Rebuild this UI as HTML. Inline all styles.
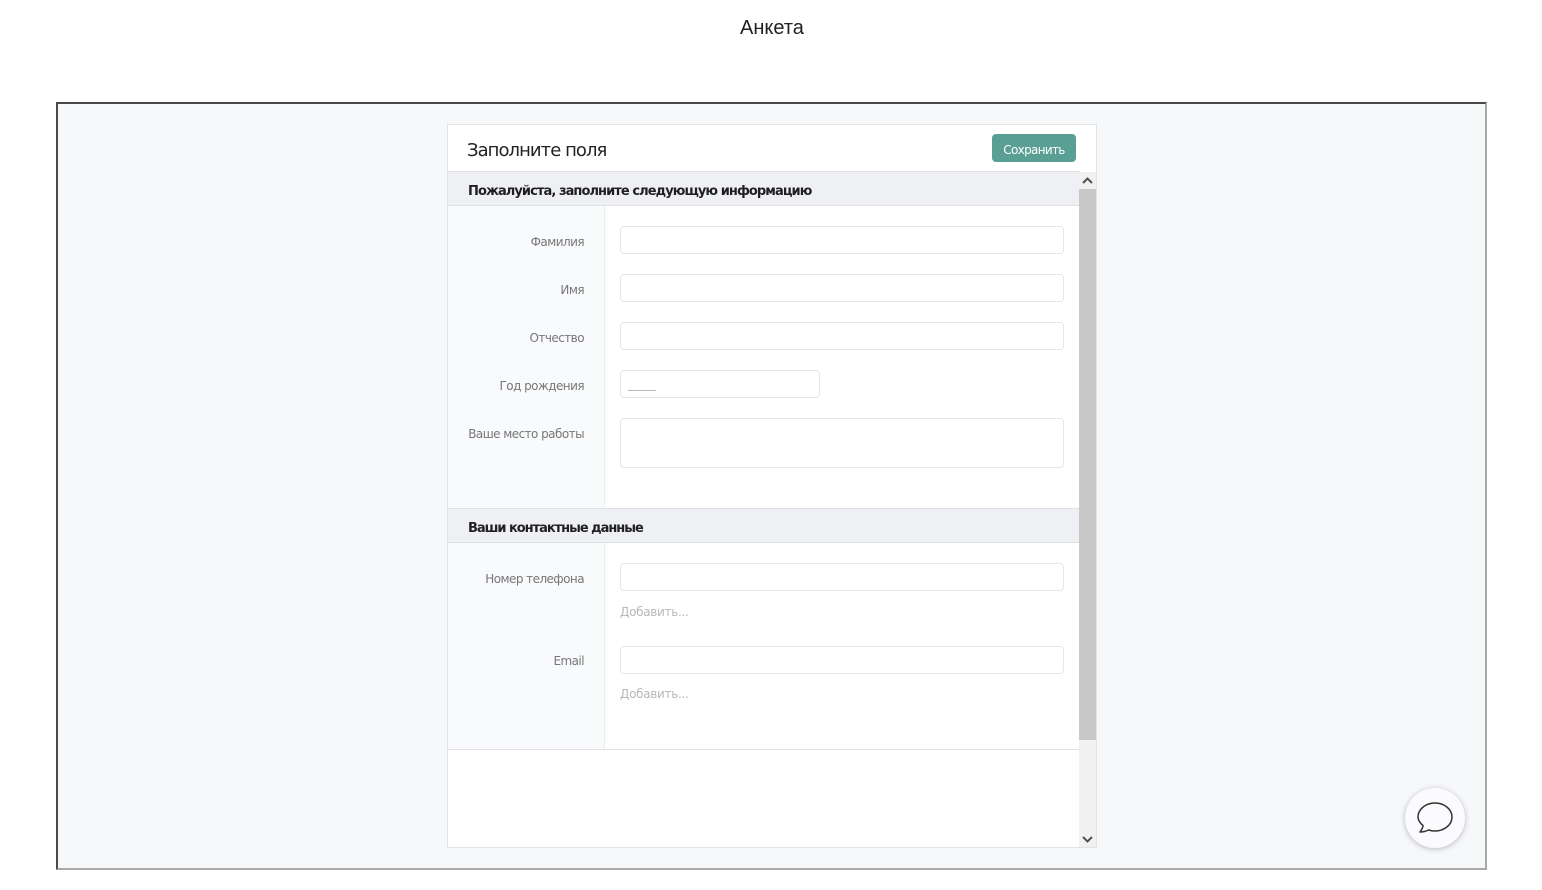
<!DOCTYPE html>
<html lang="ru"><head><meta charset="utf-8"><title>Анкета</title>
<style>
html,body{margin:0;padding:0;background:#fff;width:1542px;height:890px;overflow:hidden}
body{position:relative;font-family:"DejaVu Sans","Liberation Sans",sans-serif}
.a{position:absolute;box-sizing:border-box}
.t{position:absolute;white-space:nowrap}
.l{right:958px;font-size:12px;line-height:16px;color:#777;text-align:right;letter-spacing:-.55px}
.i{position:absolute;box-sizing:border-box;left:620px;width:444px;height:28px;background:#fff;border:1px solid #e6e7e9;border-radius:4px}
.h{font-size:13px;line-height:16px;font-weight:bold;color:#1f1f24;left:468px;letter-spacing:-.93px}
.s{position:absolute;box-sizing:border-box;left:448px;width:632px;height:35px;background:#eff0f3;border-top:1px solid #e0e1e4;border-bottom:1px solid #e0e1e4}
.add{left:620px;font-size:12px;line-height:16px;color:#b8b8b8;letter-spacing:-.3px}
</style></head><body>
<div class="t" style="left:1px;width:1542px;top:16px;text-align:center;font:20px/24px 'Liberation Sans',sans-serif;color:#222">Анкета</div>
<div class="a" style="left:56px;top:102px;width:1431px;height:768px;background:#f7f8fa;border:2px solid;border-color:#4a4a4a #a9a9a9 #a9a9a9 #4a4a4a"></div>

<div class="a" style="left:447px;top:124px;width:650px;height:724px;background:#fff;border:1px solid #e2e3e6"></div>
<div class="t" style="left:467px;top:139px;font-size:18px;line-height:24px;color:#222;letter-spacing:-.95px">Заполните поля</div>
<div class="a" style="left:992px;top:134px;width:84px;height:28px;background:#5a9f94;border-radius:4px"></div>
<div class="t" style="left:992px;width:84px;top:142px;text-align:center;font-size:12px;line-height:16px;color:#fff;letter-spacing:-.68px">Сохранить</div>

<div class="a" style="left:448px;top:205px;width:157px;height:304px;background:#f9fafc;border-right:1px solid #ecedef"></div>
<div class="a" style="left:448px;top:542px;width:157px;height:208px;background:#f9fafc;border-right:1px solid #ecedef"></div>

<div class="s" style="top:171px"></div>
<div class="t h" style="top:184px">Пожалуйста, заполните следующую информацию</div>
<div class="s" style="top:508px"></div>
<div class="t h" style="top:521px;letter-spacing:-1.03px">Ваши контактные данные</div>

<div class="t l" style="top:234px">Фамилия</div><div class="i" style="top:226px"></div>
<div class="t l" style="top:282px">Имя</div><div class="i" style="top:274px"></div>
<div class="t l" style="top:330px">Отчество</div><div class="i" style="top:322px"></div>
<div class="t l" style="top:378px">Год рождения</div><div class="i" style="top:370px;width:200px"></div>
<div class="a" style="left:628px;top:390px;width:28px;height:1px;background:#b9b9b9"></div>
<div class="t l" style="top:426px">Ваше место работы</div><div class="i" style="top:418px;height:50px"></div>

<div class="t l" style="top:571px">Номер телефона</div><div class="i" style="top:563px"></div>
<div class="t add" style="top:604px">Добавить...</div>
<div class="t l" style="top:653px">Email</div><div class="i" style="top:646px"></div>
<div class="t add" style="top:686px">Добавить...</div>

<div class="a" style="left:448px;top:749px;width:632px;height:1px;background:#e2e3e6"></div>

<div class="a" style="left:1079px;top:172px;width:17px;height:675px;background:#f1f1f1"></div>
<div class="a" style="left:1079px;top:189px;width:17px;height:551px;background:#c8c8c8"></div>
<svg class="a" style="left:1079px;top:172px" width="17" height="17"><path d="M4 11L8.500 6.500L13 11" fill="none" stroke="#505050" stroke-width="2"/></svg>
<svg class="a" style="left:1079px;top:831px" width="17" height="17"><path d="M4 6L8.500 10.500L13 6" fill="none" stroke="#505050" stroke-width="2"/></svg>

<div class="a" style="left:1405px;top:788px;width:60px;height:60px;border-radius:50%;background:#fbfbfd;box-shadow:0 1px 6px rgba(0,0,0,.25)"></div>
<svg class="a" style="left:1405px;top:788px" width="60" height="60"><path d="M15 44C16.500 42 18 39.500 18 37.500C15 35 13 32.500 13 29C13 21 21 15 30 15C39 15 47 21 47 29C47 37 39 43 30 43C27.500 43 25.500 42.700 23.500 42C21 43.300 18 44 15 44Z" fill="none" stroke="#333" stroke-width="1.500" stroke-linejoin="round"/></svg>
</body></html>
